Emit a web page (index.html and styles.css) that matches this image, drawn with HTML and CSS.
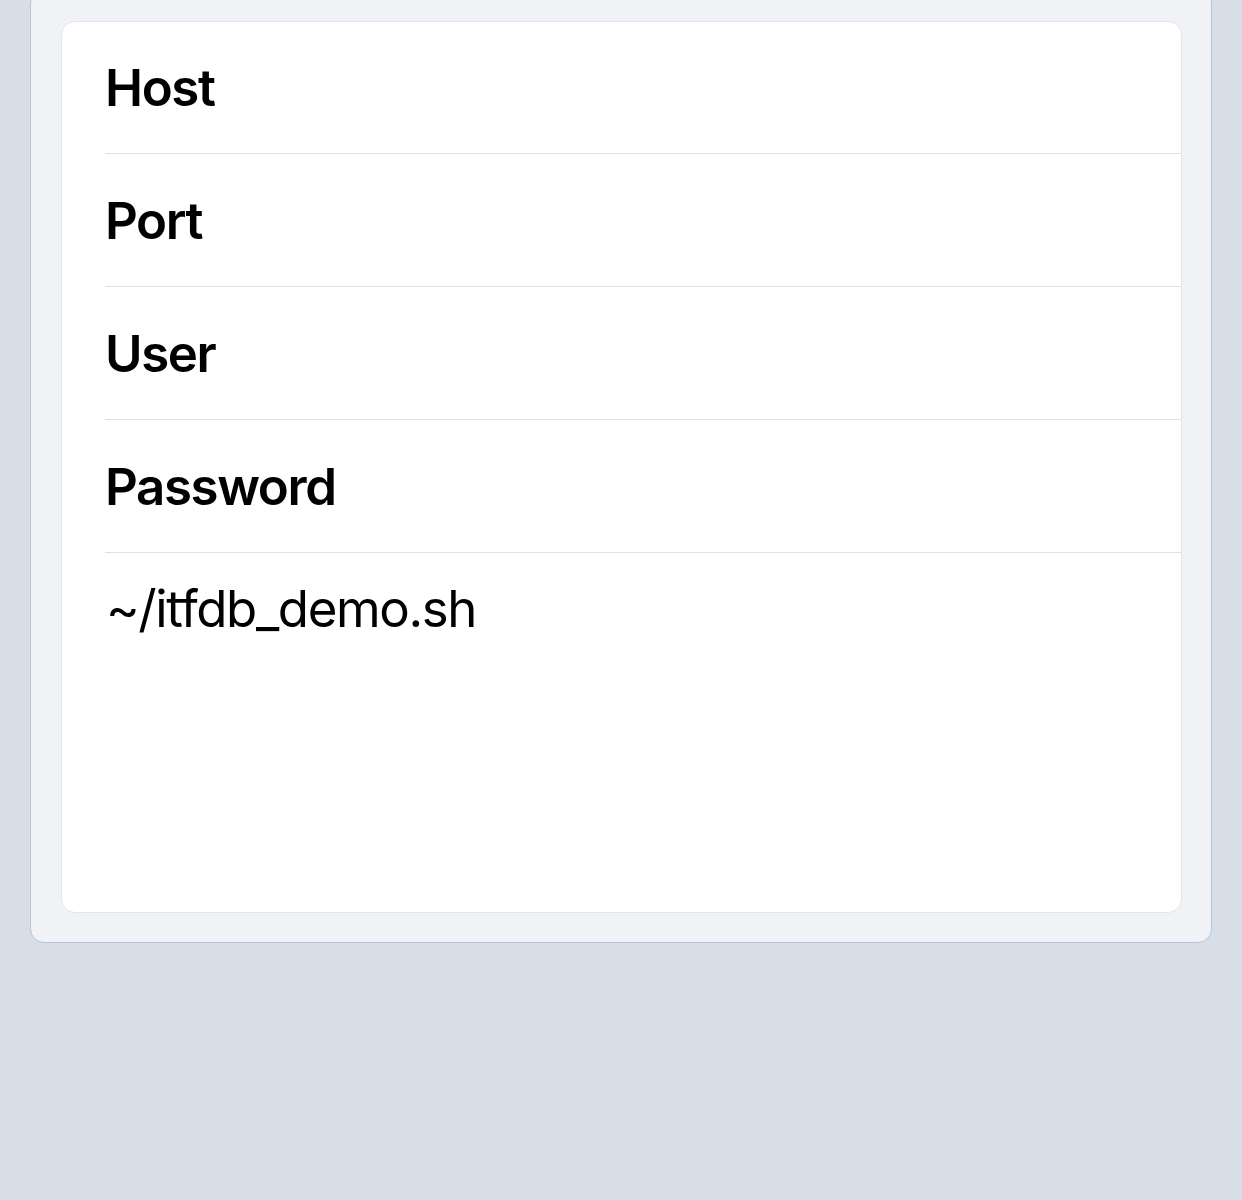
FILE: index.html
```html
<!DOCTYPE html>
<html>
<head>
<meta charset="utf-8">
<link rel="stylesheet" href="styles.css">
</head>
<body>
<div class="panel">
  <div class="card">
    <div class="row"><span class="label">Host</span></div>
    <div class="row"><span class="label">Port</span></div>
    <div class="row"><span class="label">User</span></div>
    <div class="row"><span class="label">Password</span></div>
    <div class="script">~/itfdb_demo.sh</div>
  </div>
</div>
</body>
</html>
```

FILE: styles.css
```css
html, body {
  margin: 0;
  padding: 0;
}
body {
  background: #d8dee8;
  font-family: Inter, "Noto Sans", sans-serif;
  color: #000;
  height: 1200px;
  overflow: hidden;
}
.panel {
  margin: -11px 30px 0 30px;
  background: #f0f2f6;
  border: 1px solid #b9c3d3;
  border-radius: 14px;
  padding: 31px 29px 29px 30px;
}
.card {
  background: #fff;
  border: 1px solid #e1e5ec;
  border-radius: 14px;
  height: 890px;
  overflow: hidden;
}
.row {
  margin-left: 43px;
  height: 132px;
  border-bottom: 1px solid #e0e0e3;
  display: flex;
  align-items: center;
}
.row:first-child {
  height: 131px;
}
.label {
  font-size: 51px;
  font-weight: 600;
  letter-spacing: -1.4px;
}
.script {
  padding: 25px 0 0 44px;
  font-size: 51px;
  font-weight: 400;
  line-height: 62px;
  letter-spacing: -1.4px;
}
```
